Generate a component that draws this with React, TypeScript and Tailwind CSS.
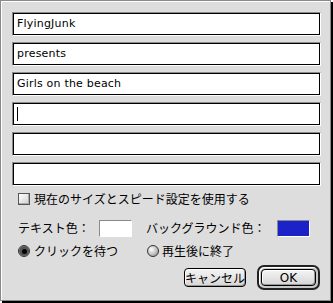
import React from "react";

const jp = { fontFamily: '"Noto Sans CJK JP", sans-serif' };
const latin = { fontFamily: '"DejaVu Sans", sans-serif' };

function Field({ value, cursor }: { value?: string; cursor?: boolean }) {
  return (
    <div className="w-[309px] h-[24px] border border-t-[#8a8a8a] border-l-[#8a8a8a] border-r-white border-b-white">
      <div className="h-full border border-black bg-white flex items-center pl-[3px] text-[11px] tracking-[0.2px] text-black" style={latin}>
        {cursor ? <span className="w-[1px] h-[14px] bg-black"></span> : value}
      </div>
    </div>
  );
}

function Radio({ checked }: { checked?: boolean }) {
  return (
    <span className="relative inline-flex w-[12px] h-[12px] rounded-full border border-[#333] items-center justify-center bg-[radial-gradient(circle_at_35%_35%,#ffffff,#8a8a8a)]">
      {checked && (
        <span className="w-[10px] h-[10px] rounded-full bg-[#555] flex items-center justify-center">
          <span className="w-[5px] h-[5px] rounded-full bg-black"></span>
        </span>
      )}
    </span>
  );
}

export default function App() {
  const fields = ["FlyingJunk", "presents", "Girls on the beach", "", "", ""];
  return (
    <div className="w-[333px] h-[303px] bg-white">
      <div className="w-[331px] h-[301px] bg-[#dddddd] border border-[#8a8a8a] shadow-[2px_2px_0_#000,inset_1px_1px_0_#fff] pt-[11px] text-[12px] text-black" style={jp}>
        <div className="flex flex-col gap-[6px] pl-[11px]">
          {fields.map((f, i) => (
            <Field key={`field-${i}`} value={f} cursor={i === 3} />
          ))}
        </div>

        <div className="flex items-center mt-[5px] h-[16px] pl-[17px]">
          <span className="w-[12px] h-[12px] border border-[#555] bg-[linear-gradient(135deg,#ffffff,#cfcfcf)] shadow-[inset_-1px_-1px_0_#aaa]"></span>
          <span className="ml-[4px] leading-none">現在のサイズとスピード設定を使用する</span>
        </div>

        <div className="flex items-center mt-[12px] h-[18px] pl-[17px]">
          <span className="w-[81px] leading-none">テキスト色：</span>
          <span className="w-[33px] h-[17px] bg-white border border-t-[#8a8a8a] border-l-[#8a8a8a] border-r-white border-b-white"></span>
          <span className="ml-[14px] w-[131px] leading-none">バックグラウンド色：</span>
          <span className="w-[33px] h-[17px] bg-[#1a22c8] border border-t-[#8a8a8a] border-l-[#8a8a8a] border-r-white border-b-white"></span>
        </div>

        <div className="flex items-center mt-[6px] h-[16px] pl-[17px]">
          <Radio checked />
          <span className="ml-[4px] w-[113px] leading-none">クリックを待つ</span>
          <Radio />
          <span className="ml-[3px] leading-none">再生後に終了</span>
        </div>

        <div className="flex items-start justify-end gap-[11px] mt-[6px] pr-[10px]">
          <button className="mt-[3px] w-[62px] h-[19px] rounded-[4px] border border-black bg-[linear-gradient(#f4f4f4,#d6d6d6)] shadow-[inset_1px_1px_0_#fff,inset_-1px_-1px_0_#999] flex items-center justify-center text-[12px] leading-none" style={jp}>
            キャンセル
          </button>
          <div className="w-[63px] h-[25px] rounded-[7px] border-2 border-[#222] bg-[#c8c8c8] shadow-[inset_1px_1px_0_#fff] p-[2px]">
            <button className="w-full h-full rounded-[4px] border border-black bg-[linear-gradient(#f4f4f4,#d6d6d6)] shadow-[inset_1px_1px_0_#fff,inset_-1px_-1px_0_#999] flex items-center justify-center text-[12px] leading-none" style={latin}>
              OK
            </button>
          </div>
        </div>
      </div>
    </div>
  );
}
